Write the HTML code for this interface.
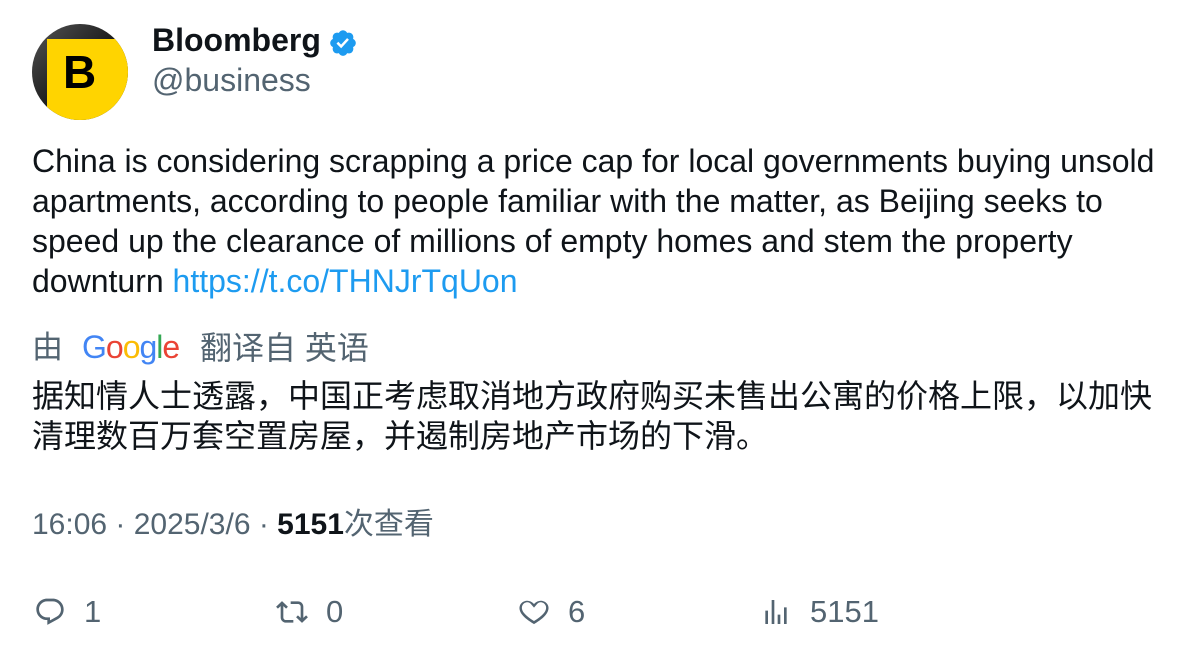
<!DOCTYPE html>
<html><head><meta charset="utf-8"><style>
body{margin:0;background:#fff;width:1196px;height:658px;overflow:hidden;font-family:"Liberation Sans","Noto Sans CJK SC",sans-serif;color:#0f1419;position:relative}
.abs{position:absolute;white-space:nowrap}
.gray{color:#536471}
</style></head><body>
<div class="abs" style="left:32px;top:24px;width:96px;height:96px;border-radius:50%;overflow:hidden;background:linear-gradient(135deg,#555,#111 60%)">
  <div style="position:absolute;left:15px;top:15px;width:90px;height:90px;background:#ffd400"></div>
  <div style="position:absolute;left:31px;top:21px;font:bold 46px 'Liberation Sans',sans-serif;color:#000">B</div>
</div>
<div class="abs" style="left:152px;top:22px;font-weight:bold;font-size:32px">Bloomberg</div>
<svg class="abs" style="left:328px;top:28px" width="30" height="30" viewBox="0 0 24 24"><path fill="#1d9bf0" d="M22.25 12c0-1.43-.88-2.67-2.19-3.34.46-1.39.2-2.9-.81-3.910s-2.52-1.27-3.91-.81c-.66-1.31-1.91-2.190-3.34-2.19s-2.67.88-3.33 2.19c-1.4-.46-2.91-.2-3.92.81s-1.26 2.52-.8 3.91c-1.31.67-2.2 1.91-2.2 3.34s.89 2.67 2.2 3.34c-.46 1.39-.21 2.9.8 3.91s2.52 1.26 3.91.81c.67 1.31 1.91 2.19 3.34 2.19s2.68-.88 3.34-2.19c1.39.45 2.9.2 3.91-.81s1.27-2.52.81-3.91c1.31-.67 2.19-1.91 2.19-3.34z"/><path fill="#fff" d="M10.54 16.2l-3.74-3.74 1.41-1.42 2.26 2.27 4.8-5.23 1.47 1.36z"/></svg>
<div class="abs gray" style="left:152px;top:62px;font-size:32px">@business</div>

<div class="abs" style="left:32px;top:141px;font-size:32px;line-height:40px;white-space:normal;width:1150px">China is considering scrapping a price cap for local governments buying unsold apartments, according to people familiar with the matter, as Beijing seeks to speed up the clearance of millions of empty homes and stem the property downturn <span style="color:#1d9bf0">https://t.co/THNJrTqUon</span></div>

<div class="abs gray" style="left:32px;top:328px;font-size:31px;line-height:40px">由</div>
<div class="abs" style="left:82px;top:327px;font-size:32px;line-height:40px;letter-spacing:-1px;font-family:'Liberation Sans',sans-serif"><span style="color:#4285f4">G</span><span style="color:#ea4335">o</span><span style="color:#fbbc05">o</span><span style="color:#4285f4">g</span><span style="color:#34a853">l</span><span style="color:#ea4335">e</span></div>
<div class="abs gray" style="left:200px;top:328px;font-size:32px;line-height:40px">翻译自 英语</div>

<div class="abs" style="left:32px;top:376px;font-size:32px;line-height:40px;white-space:normal;width:1140px">据知情人士透露，中国正考虑取消地方政府购买未售出公寓的价格上限，以加快清理数百万套空置房屋，并遏制房地产市场的下滑。</div>

<div class="abs gray" style="left:32px;top:505px;font-size:30px;line-height:40px">16:06 · 2025/3/6 · <b style="color:#0f1419">5151</b>次查看</div>

<svg class="abs" style="left:32px;top:596px" width="36" height="32" viewBox="0 0 24 24"><path fill="#536471" d="M1.75 10c0-4.42 3.58-8 8.01-8h4.370c4.5 0 8.12 3.64 8.12 8.13 0 2.96-1.6 5.68-4.19 7.11l-8.06 4.46v-3.69h-.07c-4.49.1-8.180-3.510-8.18-8.01zm8.01-6c-3.32 0-6.01 2.69-6.01 6 0 3.37 2.77 6.08 6.14 6.01l.35-.01h1.75v2.3l5.09-2.81c1.95-1.08 3.16-3.12 3.16-5.36 0-3.39-2.74-6.13-6.12-6.13H9.76z"/></svg>
<div class="abs gray" style="left:84px;top:592px;font-size:31px;line-height:40px">1</div>
<svg class="abs" style="left:274px;top:596px" width="36" height="32" viewBox="0 0 24 24"><path fill="#536471" d="M4.5 3.88l4.43 4.14-1.36 1.46L5.5 7.55V16c0 1.1.9 2 2 2H13v2H7.5c-2.21 0-4-1.79-4-4V7.55L1.43 9.48.07 8.02 4.5 3.88zM16.5 6H11V4h5.5c2.21 0 4 1.79 4 4v8.45l2.07-1.93 1.36 1.46-4.43 4.140-4.43-4.14 1.36-1.46 2.07 1.93V8c0-1.1-.9-2-2-2z"/></svg>
<div class="abs gray" style="left:326px;top:592px;font-size:31px;line-height:40px">0</div>
<svg class="abs" style="left:514px;top:594px" width="40" height="36" viewBox="0 0 24 24"><path fill="#536471" d="M16.7 5.5c-1.11-.07-2.25.41-3.2 1.81L12 9.12l-1.5-1.81C9.55 5.9 8.41 5.43 7.3 5.5c-1.34.09-2.57.96-3.12 2.32-.54 1.35-.27 3.07 1.24 4.9 1.46 1.77 3.79 3.57 6.58 5.28 2.790-1.71 5.12-3.51 6.58-5.28 1.51-1.83 1.78-3.55 1.24-4.9-.55-1.36-1.78-2.23-3.12-2.32zM12 20.06l-.5-.3c-3.04-1.81-5.6-3.78-7.24-5.76-1.82-2.21-2.37-4.5-1.63-6.34C3.36 5.85 5.19 4.63 7.17 4.5c1.61-.11 3.26.55 4.83 2.17 1.57-1.62 3.22-2.28 4.83-2.17 1.98.13 3.81 1.35 4.54 3.16.74 1.84.19 4.13-1.63 6.34-1.64 1.98-4.2 3.95-7.24 5.76l-.5.3z"/></svg>
<div class="abs gray" style="left:568px;top:592px;font-size:31px;line-height:40px">6</div>
<svg class="abs" style="left:758px;top:596px" width="36" height="32" viewBox="0 0 24 24"><path fill="#536471" d="M8.75 21V3h2v18h-2zM18 21V8.5h2V21h-2zM4 21l.004-10h2L6 21H4zm9.248 0v-7h2v7h-2z"/></svg>
<div class="abs gray" style="left:810px;top:592px;font-size:31px;line-height:40px">5151</div>
</body></html>
